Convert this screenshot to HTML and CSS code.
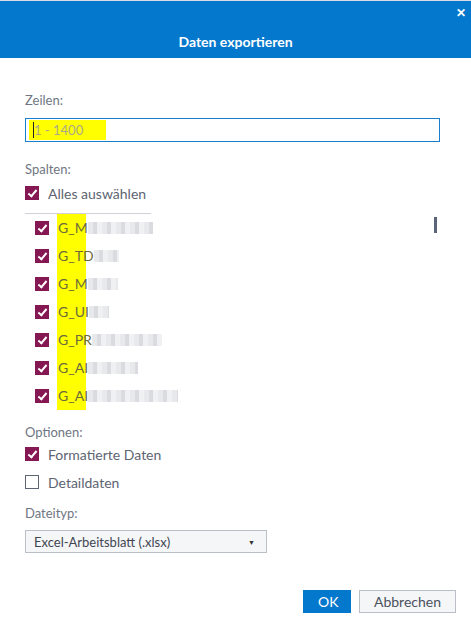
FILE: index.html
```html
<!DOCTYPE html>
<html lang="de">
<head>
  <meta charset="UTF-8">
  <title>Daten exportieren</title>
  <link rel="stylesheet" href="styles.css">
</head>
<body>
  <div class="dialog">
    <header class="titlebar">
      <span class="close">&#x2715;</span>
      <h1>Daten exportieren</h1>
    </header>

    <main class="content">
      <div class="label">Zeilen:</div>
      <div class="rows-input"><span class="hl"><span class="caret"></span>1 - 1400</span></div>

      <div class="label spalten">Spalten:</div>
      <label class="check"><span class="box on"></span>Alles auswählen</label>
      <div class="sep"></div>

      <div class="columns">
        <ul class="col-list">
          <li><span class="box on"></span><span class="name">G_M</span><span class="blur" style="width:65px"></span></li>
          <li><span class="box on"></span><span class="name">G_TD</span><span class="blur" style="width:25px"></span></li>
          <li><span class="box on"></span><span class="name">G_M</span><span class="blur" style="width:30px"></span></li>
          <li><span class="box on"></span><span class="name">G_UI</span><span class="blur" style="width:20px"></span></li>
          <li><span class="box on"></span><span class="name">G_PR</span><span class="blur" style="width:70px"></span></li>
          <li><span class="box on"></span><span class="name">G_AI</span><span class="blur" style="width:50px"></span></li>
          <li><span class="box on"></span><span class="name">G_AI</span><span class="blur" style="width:90px"></span></li>
        </ul>
        <div class="thumb"></div>
      </div>

      <div class="label opt">Optionen:</div>
      <label class="check"><span class="box on"></span>Formatierte Daten</label>
      <label class="check"><span class="box"></span>Detaildaten</label>

      <div class="label typ">Dateityp:</div>
      <div class="select"><span>Excel-Arbeitsblatt (.xlsx)</span><span class="arrow">&#9660;</span></div>
    </main>

    <footer class="actions">
      <button class="btn primary">OK</button>
      <button class="btn">Abbrechen</button>
    </footer>
  </div>
</body>
</html>
```
FILE: styles.css
```css
body {
  margin: 0;
  font-family: Lato, "Noto Sans", sans-serif;
  font-size: 13px;
  color: #59606c;
  background: #fff;
}

.dialog {
  width: 471px;
  height: 625px;
  border-top: 1px solid #d9dde3;
  box-sizing: border-box;
  display: flex;
  flex-direction: column;
}

.titlebar {
  background: #0478cc;
  color: #fff;
  height: 57px;
  position: relative;
}

.titlebar h1 {
  margin: 0;
  padding-top: 32px;
  text-align: center;
  font-size: 14px;
  font-weight: bold;
  line-height: 18px;
}

.close {
  position: absolute;
  right: 5px;
  top: 5px;
  font-size: 12px;
  font-weight: bold;
  line-height: 14px;
}

.content {
  padding: 34px 31px 0 25px;
  flex: 1;
}

.label {
  font-size: 13px;
  line-height: 16px;
  color: #6f7683;
}

.rows-input {
  margin-top: 10px;
  height: 24px;
  border: 1px solid #1a7ecf;
  box-sizing: border-box;
  padding: 1px 3px;
}

.hl {
  display: inline-block;
  background: #ffff00;
  width: 77px;
  height: 20px;
  line-height: 20px;
  color: #a9a98a;
  font-size: 13px;
  padding-left: 4px;
  box-sizing: border-box;
}

.caret {
  display: inline-block;
  width: 1px;
  height: 16px;
  background: #222;
  vertical-align: -3px;
}

.spalten {
  margin-top: 19px;
}

.check {
  display: flex;
  align-items: center;
  gap: 9px;
  height: 28px;
  font-size: 14px;
  color: #5d6472;
}

.spalten + .check {
  margin-top: 2px;
}

.box {
  width: 14px;
  height: 14px;
  border: 1px solid #5d6472;
  box-sizing: border-box;
  display: inline-block;
  flex: none;
  position: relative;
}

.box.on {
  background: #851753;
  border-color: #851753;
}

.box.on::after {
  content: "";
  position: absolute;
  left: 4px;
  top: 1px;
  width: 3px;
  height: 7px;
  border: solid #fff;
  border-width: 0 2px 2px 0;
  transform: rotate(40deg);
}

.sep {
  width: 126px;
  height: 1px;
  background: #cfd3d9;
  margin-top: 6px;
}

.columns {
  display: flex;
  justify-content: space-between;
  padding-left: 10px;
  height: 205px;
}

.col-list {
  list-style: none;
  margin: 0;
  padding: 0;
}

.col-list li {
  display: flex;
  align-items: center;
  height: 28px;
  font-size: 14px;
  color: #6b6b3c;
}

.col-list .box {
  margin-right: 8px;
}

.col-list .name {
  min-width: 29px;
  height: 28px;
  line-height: 28px;
  background: linear-gradient(#ffff00, #ffff00) no-repeat;
  background-size: 29px 100%;
  padding-left: 1px;
  white-space: nowrap;
}

.blur {
  display: inline-block;
  height: 12px;
  background: repeating-linear-gradient(90deg, #e4e5e8 0 5px, #d3d5da 5px 9px, #eceef0 9px 14px);
  opacity: 0.85;
}

.thumb {
  width: 3px;
  height: 16px;
  background: #5b6478;
  margin-top: 3px;
  margin-right: 3px;
}

.opt {
  margin-top: 5px;
}

.typ {
  margin-top: 9px;
}

.select {
  margin-top: 9px;
  width: 242px;
  height: 23px;
  border: 1px solid #b9bec7;
  background: #f5f6f8;
  box-sizing: border-box;
  display: flex;
  justify-content: space-between;
  align-items: center;
  padding: 0 11px 0 8px;
  font-size: 13px;
  color: #3f4652;
}

.arrow {
  font-size: 7px;
  color: #333;
}

.actions {
  display: flex;
  justify-content: flex-end;
  gap: 8px;
  padding: 0 15px 12px 0;
}

.btn {
  height: 23px;
  font-family: Lato, "Noto Sans", sans-serif;
  font-size: 14px;
  border: 1px solid #b9bec7;
  background: #f5f6f8;
  color: #4a515d;
  padding: 0 14px;
}

.btn.primary {
  width: 48px;
  background: #0478cc;
  border-color: #0478cc;
  color: #fff;
}
```
